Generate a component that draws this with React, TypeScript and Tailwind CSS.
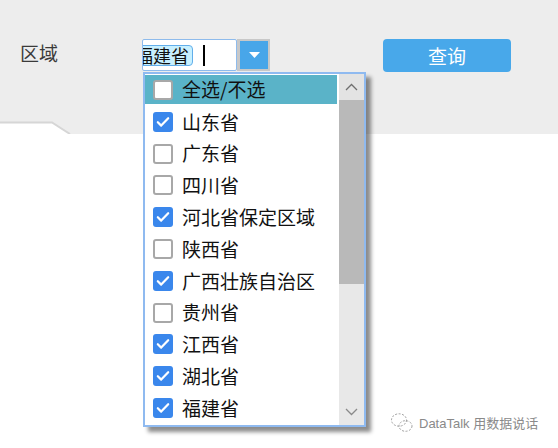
import { useState } from "react";

type Province = { name: string; checked: boolean };

const PROVINCES: Province[] = [
  { name: "山东省", checked: true },
  { name: "广东省", checked: false },
  { name: "四川省", checked: false },
  { name: "河北省保定区域", checked: true },
  { name: "陕西省", checked: false },
  { name: "广西壮族自治区", checked: true },
  { name: "贵州省", checked: false },
  { name: "江西省", checked: true },
  { name: "湖北省", checked: true },
  { name: "福建省", checked: true },
];

const FONT = { fontFamily: '"Noto Sans CJK SC", "Noto Sans", sans-serif' };

function Check({ on }: { on: boolean }) {
  if (on) {
    return (
      <span className="w-[20px] h-[20px] rounded-[3px] bg-[#3a87ec] flex items-center justify-center shrink-0">
        <svg width="14" height="12" viewBox="0 0 14 12" fill="none" stroke="white" strokeWidth="2.2" strokeLinecap="round" strokeLinejoin="round">
          <polyline points="1.8 6.2 5.2 9.6 12.2 2.2" />
        </svg>
      </span>
    );
  }
  return <span className="w-[20px] h-[20px] rounded-[3px] bg-white border-2 border-[#a8a8a8] shrink-0" />;
}

export default function App() {
  const [items, setItems] = useState(PROVINCES);

  const toggle = (i: number) =>
    setItems((prev) => prev.map((p, j) => (j === i ? { ...p, checked: !p.checked } : p)));

  return (
    <div className="relative w-[558px] h-[448px] bg-white overflow-hidden" style={FONT}>
      {/* Filter bar */}
      <div className="h-[134px] bg-[#ededed] flex flex-col">
        <div className="flex items-start pt-[39px]">
          <span
            className="ml-[20px] w-[122px] h-[32px] leading-[32px] text-[19px] text-[#3a3a3a]"
            style={{ fontFamily: '"Liberation Serif", "Noto Sans CJK SC", serif' }}
          >
            区域
          </span>

          {/* Combo box */}
          <div className="flex h-[32px] w-[128px]">
            <div className="w-[95px] h-full bg-white border border-[#8ebbec] rounded-[2px] overflow-hidden flex items-center">
              <span className="shrink-0 -ml-[11px] h-[21px] pl-[2px] pr-[3px] bg-[#c7f0ff] border-[1.5px] border-[#62aeea] rounded-[4px] text-[18px] leading-[18px] text-[#111] flex items-center whitespace-nowrap">
                福建省
              </span>
              <span className="shrink-0 ml-[10px] w-[2px] h-[21px] bg-black" />
            </div>
            <div className="w-[33px] h-full bg-[#c8c8c8] pl-[3px] pr-[2px] py-[2px]">
              <div className="w-full h-full bg-[#48a6e9] flex items-center justify-center">
                <svg width="11" height="6" viewBox="0 0 11 6">
                  <polygon points="0 0 11 0 5.5 6" fill="white" />
                </svg>
              </div>
            </div>
          </div>

          <button
            type="button"
            className="ml-[113px] w-[128px] h-[33px] rounded-[4px] bg-[#48a8ea] text-white text-[19px] leading-[33px]"
          >
            查询
          </button>
        </div>

        {/* Tab stub */}
        <svg className="mt-auto block" width="74" height="13" viewBox="0 0 74 13">
          <path d="M0 13 V1.5 H52 L70 13 Z" fill="white" />
          <path d="M0 1.5 H52 L70 13" fill="none" stroke="#d6d6d6" strokeWidth="2" />
        </svg>
      </div>

      {/* Dropdown list */}
      <div className="absolute left-[143px] top-[72px] w-[223px] h-[355px] bg-white border-2 border-[#8fbaf0] shadow-[5px_5px_4px_rgba(0,0,0,0.45)] flex overflow-hidden">
        <div className="w-[194px] pt-[1px]">
          <div className="w-[192px] h-[29px] bg-[#5ab3c8] flex items-center pl-[8px] gap-[9px]">
            <Check on={false} />
            <span className="text-[19px] text-[#111]">全选/不选</span>
          </div>
          <ul className="pt-[2px]">
            {items.map((p, i) => (
              <li
                key={p.name}
                onClick={() => toggle(i)}
                className="h-[31.8px] flex items-center pl-[8px] gap-[9px] cursor-pointer"
              >
                <Check on={p.checked} />
                <span className="text-[19px] text-[#111] whitespace-nowrap">{p.name}</span>
              </li>
            ))}
          </ul>
        </div>

        {/* Scrollbar */}
        <div className="w-[25px] flex flex-col bg-[#e8e8e8]">
          <div className="h-[26px] bg-[#e3e3e3] flex items-center justify-center">
            <svg width="13" height="8" viewBox="0 0 13 8" fill="none" stroke="#6e6e6e" strokeWidth="1.3">
              <polyline points="1 7 6.5 1.5 12 7" />
            </svg>
          </div>
          <div className="h-[184px] bg-[#b9b9b9]" />
          <div className="flex-1" />
          <div className="h-[26px] flex items-center justify-center">
            <svg width="13" height="8" viewBox="0 0 13 8" fill="none" stroke="#8a8a8a" strokeWidth="1.3">
              <polyline points="1 1 6.5 6.5 12 1" />
            </svg>
          </div>
        </div>
      </div>

      {/* Watermark */}
      <div className="absolute left-[390px] top-[412px] flex items-center gap-[5px] text-[#8a8a8a]">
        <svg width="24" height="22" viewBox="0 0 24 22" fill="none" stroke="#a0a0a0" strokeWidth="1" strokeDasharray="2 1.5">
          <ellipse cx="9" cy="8" rx="7.5" ry="6.2" />
          <ellipse cx="15.5" cy="14" rx="6.5" ry="5.3" />
        </svg>
        <span className="text-[13px] leading-none" style={{ fontFamily: '"Liberation Sans", "Noto Sans CJK SC", sans-serif' }}>
          DataTalk 用数据说话
        </span>
      </div>
    </div>
  );
}
